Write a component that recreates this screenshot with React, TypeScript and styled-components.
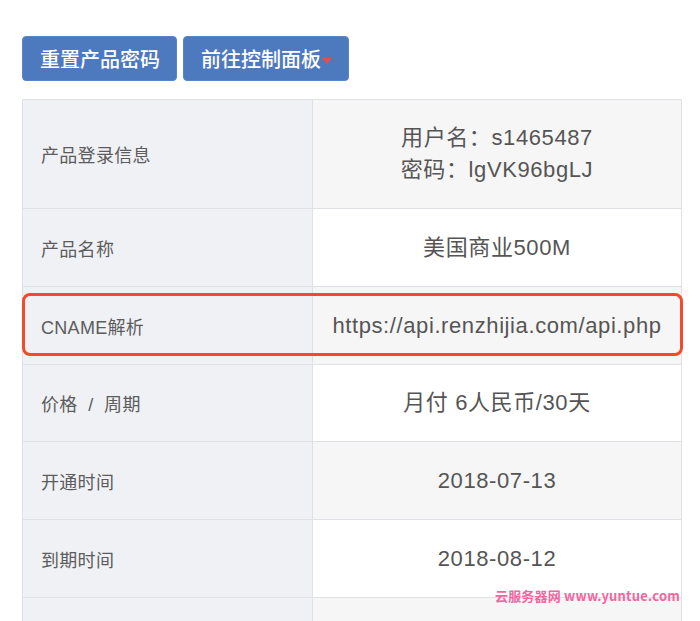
import styled, { createGlobalStyle } from 'styled-components';

const GlobalStyle = createGlobalStyle`
  html, body {
    margin: 0;
    padding: 0;
    background: #fff;
    font-family: "Liberation Sans", "Noto Sans CJK SC", sans-serif;
  }
`;

const Page = styled.div`
  position: relative;
  width: 700px;
  height: 621px;
  overflow: hidden;
  padding: 36px 0 0 22px;
  box-sizing: border-box;
`;

const Toolbar = styled.div`
  display: flex;
  gap: 6px;
  margin-bottom: 18px;
`;

const Button = styled.button`
  display: flex;
  align-items: center;
  height: 45px;
  padding: 0 16px 0 17px;
  background: #4d79bf;
  border: 1px solid #5a86c8;
  border-radius: 4px;
  color: #fff;
  font-family: "Noto Sans CJK SC", sans-serif;
  font-size: 20px;
  font-weight: 500;
  cursor: pointer;
`;

const Caret = styled.span`
  display: inline-block;
  margin-left: 1px;
  margin-top: 4px;
  width: 0;
  height: 0;
  border-left: 5px solid transparent;
  border-right: 5px solid transparent;
  border-top: 6px solid #e05050;
`;

const Table = styled.div`
  width: 659px;
  border-top: 1px solid #dfe1e6;
  border-left: 1px solid #dfe1e6;
  display: grid;
  grid-template-columns: 290px 1fr;
`;

const Row = styled.div`
  display: contents;
`;

const Label = styled.div`
  height: ${({ $h }) => $h}px;
  box-sizing: border-box;
  display: flex;
  align-items: center;
  padding-left: 18px;
  background: #f0f1f5;
  border-right: 1px solid #dfe1e6;
  border-bottom: 1px solid #dfe1e6;
  color: #5c5c5c;
  font-size: 18px;
  letter-spacing: 0.3px;
  white-space: pre;
`;

const Value = styled.div`
  height: ${({ $h }) => $h}px;
  box-sizing: border-box;
  display: flex;
  flex-direction: column;
  align-items: center;
  justify-content: center;
  background: ${({ $shade }) => ($shade ? '#f6f6f6' : '#fff')};
  border-right: 1px solid #dfe1e6;
  border-bottom: 1px solid #dfe1e6;
  color: #555;
  font-size: 22px;
  letter-spacing: 0.6px;
  line-height: 32px;
`;

const Highlight = styled.div`
  position: absolute;
  left: 22px;
  top: 293px;
  width: 661px;
  height: 63px;
  box-sizing: border-box;
  border: 3px solid #f5492a;
  border-radius: 8px;
  pointer-events: none;
`;

const Watermark = styled.div`
  position: absolute;
  right: 20px;
  top: 586px;
  color: #f0679f;
  font-family: "Noto Sans CJK SC", sans-serif;
  font-size: 13px;
  font-weight: 700;
  letter-spacing: 0.2px;
  white-space: nowrap;
`;

const rows = [
  { label: '产品登录信息', values: ['用户名：s1465487', '密码：lgVK96bgLJ'], h: 109 },
  { label: '产品名称', values: ['美国商业500M'], h: 78 },
  { label: 'CNAME解析', values: ['https://api.renzhijia.com/api.php'], h: 78 },
  { label: '价格  /  周期', values: ['月付 6人民币/30天'], h: 77 },
  { label: '开通时间', values: ['2018-07-13'], h: 78 },
  { label: '到期时间', values: ['2018-08-12'], h: 78 },
  { label: '', values: [''], h: 78 },
];

export default function App() {
  return (
    <Page>
      <GlobalStyle />
      <Toolbar>
        <Button>重置产品密码</Button>
        <Button>
          前往控制面板
          <Caret />
        </Button>
      </Toolbar>
      <Table>
        {rows.map((r, i) => (
          <Row key={i}>
            <Label $h={r.h}>{r.label}</Label>
            <Value $h={r.h} $shade={i % 2 === 0}>
              {r.values.map(v => <span key={v}>{v}</span>)}
            </Value>
          </Row>
        ))}
      </Table>
      <Highlight />
      <Watermark>云服务器网 www.yuntue.com</Watermark>
    </Page>
  );
}
